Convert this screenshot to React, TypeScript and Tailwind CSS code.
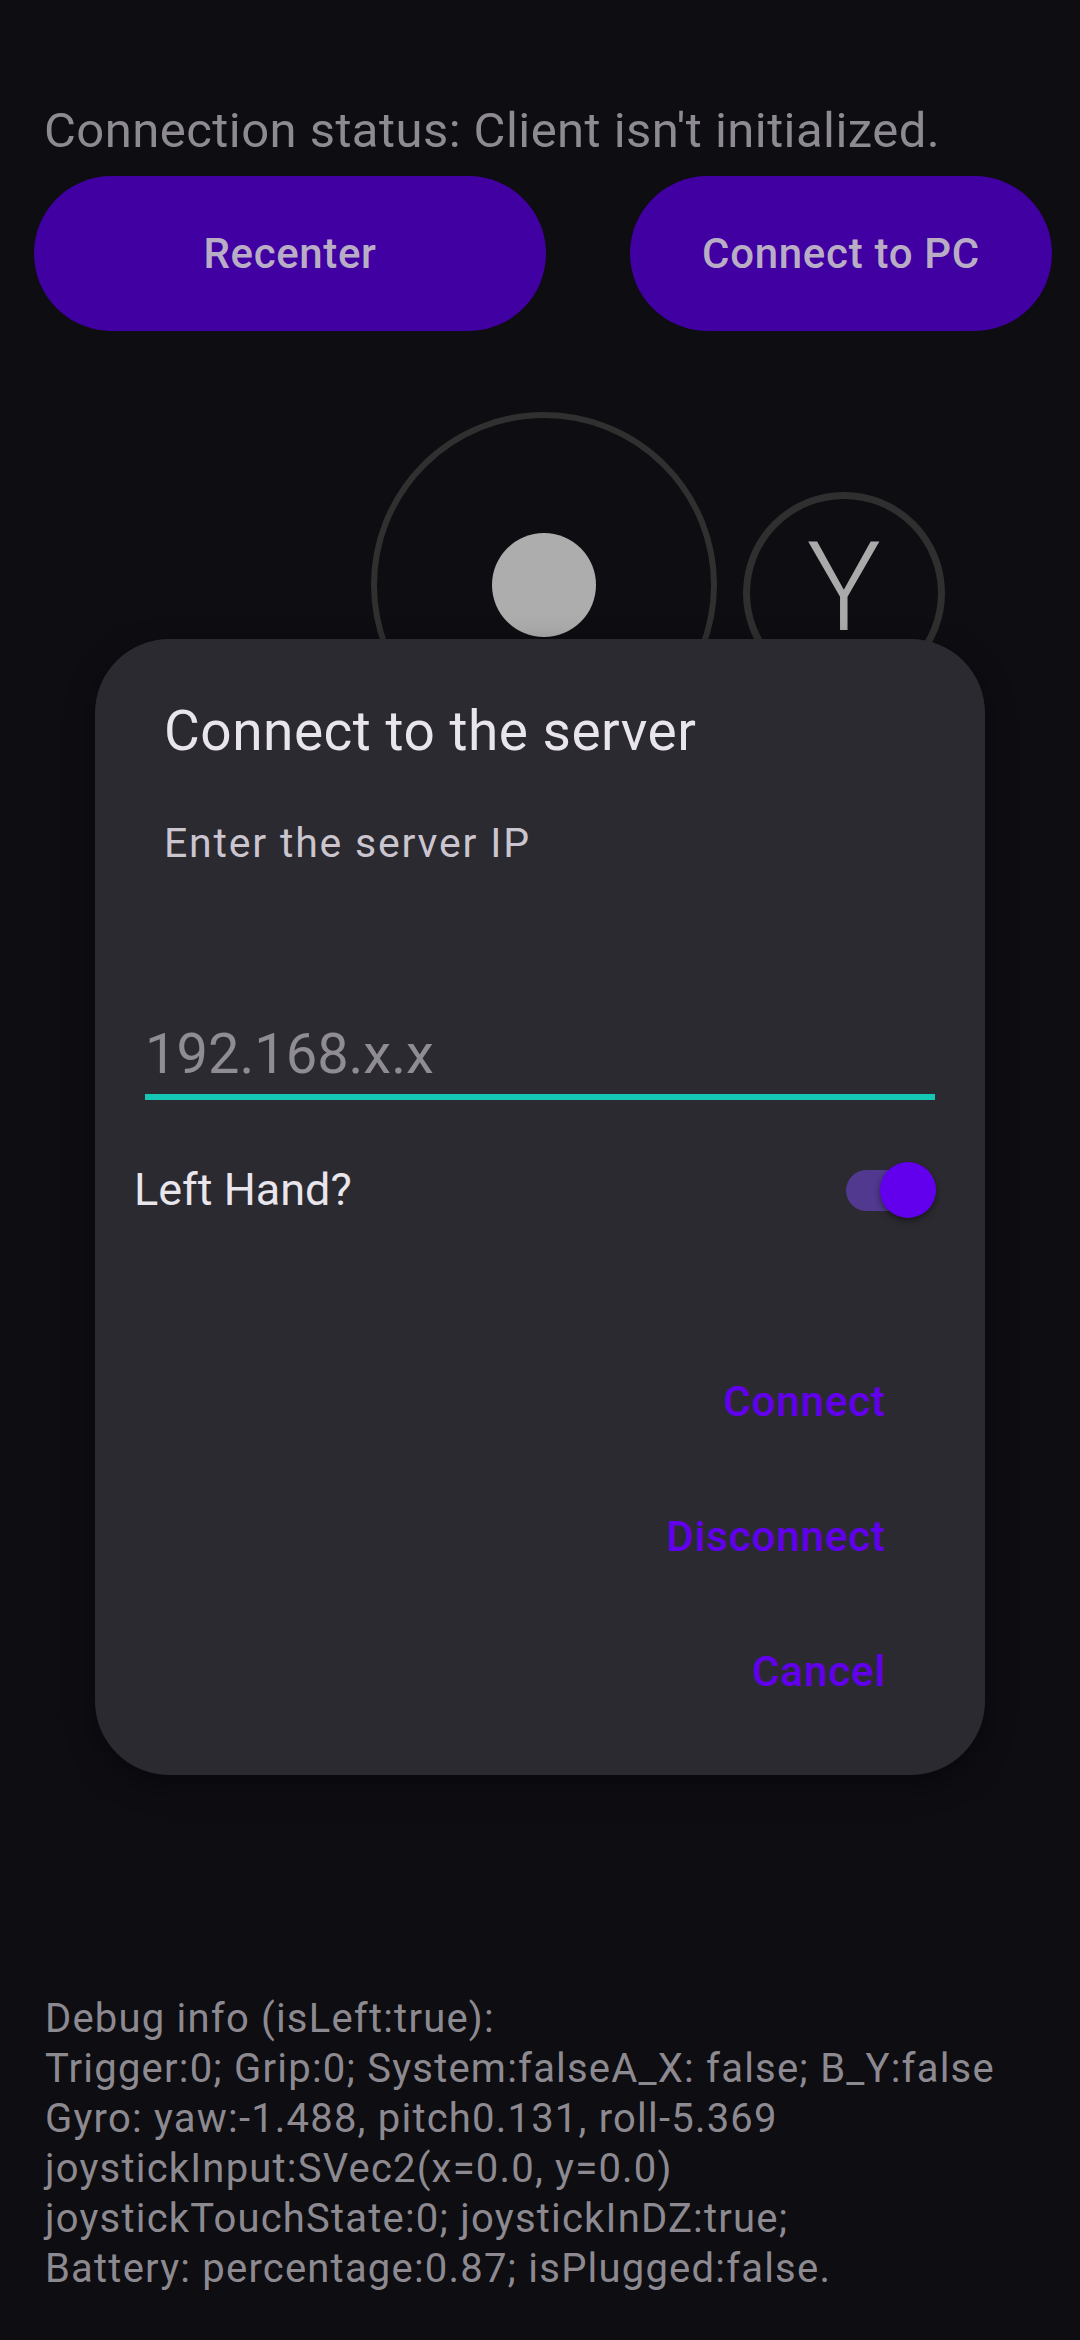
import { useState } from "react";

const debugLines = [
  "Debug info (isLeft:true):",
  "Trigger:0; Grip:0; System:falseA_X: false; B_Y:false",
  "Gyro: yaw:-1.488, pitch0.131, roll-5.369",
  "joystickInput:SVec2(x=0.0, y=0.0)",
  "joystickTouchState:0; joystickInDZ:true;",
  "Battery: percentage:0.87; isPlugged:false.",
];

const ConnectDialog = () => {
  const [ip, setIp] = useState("");
  const [leftHand, setLeftHand] = useState(true);

  return (
    <div className="absolute left-[95px] top-[639px] w-[890px] h-[1136px] rounded-[74px] bg-[#2b2a30] shadow-[0_10px_30px_rgba(0,0,0,0.4)] flex flex-col">
      <h2 className="pt-[60px] pl-[69px] text-[55px] leading-[64px] tracking-[0.5px] text-[#e9e5ed]">
        Connect to the server
      </h2>
      <p className="mt-[56px] pl-[69px] text-[41px] leading-[48px] tracking-[1.8px] text-[#cac5cf]">
        Enter the server IP
      </p>

      <div className="mt-[154px] mx-[50px] border-b-[6px] border-[#15c8b6] pb-[7px]">
        <input
          value={ip}
          onChange={(e) => setIp(e.target.value)}
          placeholder="192.168.x.x"
          className="w-full h-[66px] bg-transparent outline-none text-[56px] leading-[66px] text-[#e9e5ed] placeholder:text-[#8f8c93]"
        />
      </div>

      <div className="mt-[62px] pl-[39px] pr-[49px] flex items-center justify-between">
        <span className="text-[45px] leading-[52px] text-[#e9e5ed]">
          Left Hand?
        </span>
        <button
          onClick={() => setLeftHand(!leftHand)}
          className="relative w-[90px] h-[56px] flex items-center"
        >
          <span className="block w-[82px] h-[41px] rounded-full bg-[#50398f]" />
          <span className="absolute right-0 top-0 w-[56px] h-[56px] rounded-full bg-[#6200ee] shadow-[0_3px_6px_rgba(0,0,0,0.45)]" />
        </button>
      </div>

      <div className="mt-[159px] pr-[99px] flex flex-col items-end gap-[85px] text-[42px] leading-[50px] font-medium tracking-[0.9px] text-[#6200ee]">
        <button>Connect</button>
        <button>Disconnect</button>
        <button>Cancel</button>
      </div>
    </div>
  );
};

export default function App() {
  return (
    <div
      className="relative w-[1080px] h-[2340px] bg-[#0e0d12] overflow-hidden"
      style={{ fontFamily: "Roboto, 'Noto Sans', sans-serif" }}
    >
      <p className="pt-[102px] pl-[44px] text-[49px] leading-[58px] tracking-[0.45px] text-[#8d8b91]">
        Connection status: Client isn't initialized.
      </p>

      <div className="mt-[16px] pl-[34px] flex gap-[84px]">
        <button className="w-[512px] h-[155px] rounded-full bg-[#4100a2] text-[42px] font-medium tracking-[0.6px] text-[#b9adc6]">
          Recenter
        </button>
        <button className="w-[422px] h-[155px] rounded-full bg-[#4100a2] text-[42px] font-medium tracking-[0.7px] text-[#b9adc6]">
          Connect to PC
        </button>
      </div>

      <div className="mt-[81px] pl-[371px] flex items-start gap-[26px]">
        <div className="w-[346px] h-[346px] rounded-full border-[6px] border-[#303030] flex items-center justify-center">
          <div className="w-[104px] h-[104px] rounded-full bg-[#adadad]" />
        </div>
        <div className="mt-[80px] w-[202px] h-[202px] rounded-full border-[7px] border-[#2f2f2f] flex items-center justify-center">
          <span className="-mt-[10px] text-[124px] leading-none font-light text-[#aaaaaa]">
            Y
          </span>
        </div>
      </div>

      <div className="mt-[1236px] pl-[45px] text-[40px] leading-[50px] tracking-[1.2px] text-[#8c8a90]">
        {debugLines.map((line, idx) => (
          <p key={idx}>{line}</p>
        ))}
      </div>

      <ConnectDialog />
    </div>
  );
}
